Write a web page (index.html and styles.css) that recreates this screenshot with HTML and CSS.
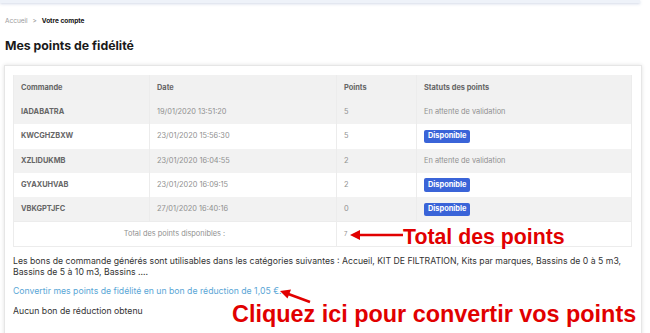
FILE: index.html
```html
<!DOCTYPE html>
<html lang="fr">
<head>
  <meta charset="UTF-8" />
  <meta name="viewport" content="width=device-width, initial-scale=1.0" />
  <title>Mes points de fidélité</title>
  <link rel="stylesheet" href="styles.css">
</head>
<body>
  <div class="topbar"></div>

  <main class="page">
    <nav class="crumbs">
      <a href="#">Accueil</a>
      <span class="sep">&gt;</span>
      <strong>Votre compte</strong>
    </nav>

    <h1>Mes points de fidélité</h1>

    <section class="card">
      <table class="points">
        <thead>
          <tr>
            <th class="c-cmd">Commande</th>
            <th class="c-date">Date</th>
            <th class="c-pts">Points</th>
            <th class="c-status">Statuts des points</th>
          </tr>
        </thead>
        <tbody>
          <tr>
            <td class="ref">IADABATRA</td>
            <td>19/01/2020 13:51:20</td>
            <td>5</td>
            <td>En attente de validation</td>
          </tr>
          <tr>
            <td class="ref">KWCGHZBXW</td>
            <td>23/01/2020 15:56:30</td>
            <td>5</td>
            <td><span class="badge">Disponible</span></td>
          </tr>
          <tr>
            <td class="ref">XZLIDUKMB</td>
            <td>23/01/2020 16:04:55</td>
            <td>2</td>
            <td>En attente de validation</td>
          </tr>
          <tr>
            <td class="ref">GYAXUHVAB</td>
            <td>23/01/2020 16:09:15</td>
            <td>2</td>
            <td><span class="badge">Disponible</span></td>
          </tr>
          <tr>
            <td class="ref">VBKGPTJFC</td>
            <td>27/01/2020 16:40:16</td>
            <td>0</td>
            <td><span class="badge">Disponible</span></td>
          </tr>
        </tbody>
        <tfoot>
          <tr>
            <td colspan="2" class="total-label">Total des points disponibles :</td>
            <td colspan="2" class="total-value">7</td>
          </tr>
        </tfoot>
      </table>

      <p class="info">Les bons de commande générés sont utilisables dans les catégories suivantes : Accueil, KIT DE FILTRATION, Kits par marques, Bassins de 0 à 5 m3, Bassins de 5 à 10 m3, Bassins ....</p>
      <p class="convert"><a href="#">Convertir mes points de fidélité en un bon de réduction de 1,05 €.</a></p>
      <p class="empty">Aucun bon de réduction obtenu</p>
    </section>
  </main>

  <!-- annotations drawn over the screenshot -->
  <svg class="arrows" width="650" height="333" viewBox="0 0 650 333">
    <line x1="403" y1="235" x2="357" y2="235" stroke="#e10000" stroke-width="2.6" />
    <polygon points="350,235 360,230 360,240" fill="#e10000" />
    <line x1="310" y1="302" x2="287" y2="293.5" stroke="#e10000" stroke-width="2.6" />
    <polygon points="280,291 291,289.5 287.5,298.5" fill="#e10000" />
  </svg>
  <div class="note note-total">Total des points</div>
  <div class="note note-convert">Cliquez ici pour convertir vos points</div>
</body>
</html>
```

FILE: styles.css
```css
body {
  margin: 0;
  font-family: Inter, "Open Sans", sans-serif;
  color: #333;
  background: #fff;
  position: relative;
  overflow: hidden;
  height: 333px;
}
.topbar {
  width: 640px;
  height: 3px;
  background: #eef2f9;
  box-shadow: 0 1px 3px rgba(70, 100, 160, 0.25);
}
.page {
  padding: 0 8px 0 4px;
}
.crumbs {
  margin-top: 14px;
  padding-left: 1px;
  font-size: 6.5px;
  line-height: 8px;
  color: #999;
}
.crumbs a {
  color: #999;
  text-decoration: none;
}
.crumbs .sep {
  margin: 0 3px;
}
.crumbs strong {
  color: #111;
  font-weight: 700;
}
h1 {
  margin: 13px 0 11px 1px;
  font-size: 12.3px;
  line-height: 16px;
  font-weight: 700;
  color: #1a1a1a;
}
.card {
  border: 1px solid #e6e6e6;
  box-shadow: 0 0 4px rgba(0, 0, 0, 0.12);
  padding: 9px 9px 30px 8px;
  background: #fff;
}
.points {
  width: 100%;
  border-collapse: collapse;
  font-size: 7.4px;
  color: #909090;
}
.points th,
.points td {
  text-align: left;
  padding: 8px 8px 8px 7px;
  line-height: 8.2px;
  border-left: 1px solid #ececec;
  border-right: 1px solid #ececec;
}
.points th {
  font-weight: 700;
  color: #666;
  background: #f1f1f1;
  padding-top: 9px;
}
.c-cmd { width: 120px; }
.c-date { width: 171px; }
.c-pts { width: 64px; }
.points tbody tr:nth-child(odd) td {
  background: #f2f2f2;
}
.points td.ref {
  font-weight: 700;
  color: #666;
}
.badge {
  display: inline-block;
  background: #3a64d8;
  color: #fff;
  font-weight: 700;
  padding: 2.5px 4px;
  border-radius: 2px;
  margin: -3px 0;
}
.points tfoot td {
  border: 1px solid #ececec;
}
.total-label {
  text-align: center !important;
}
.total-value {
  font-size: 6px;
}
.info {
  margin: 9px 0 0;
  font-size: 8.7px;
  line-height: 11px;
  color: #333;
}
.convert {
  margin: 8px 0 0;
  font-size: 8.7px;
  line-height: 11px;
}
.convert a {
  color: #5aa6d6;
  text-decoration: none;
}
.empty {
  margin: 9px 0 0;
  font-size: 8.7px;
  line-height: 11px;
}
.arrows {
  position: absolute;
  left: 0;
  top: 0;
}
.note {
  position: absolute;
  font-family: "Liberation Sans", Arial, sans-serif;
  font-weight: 700;
  color: #e10000;
  white-space: nowrap;
}
.note-total {
  left: 403px;
  top: 225px;
  font-size: 21.3px;
  line-height: 24px;
}
.note-convert {
  left: 232px;
  top: 300px;
  font-size: 23.4px;
  line-height: 28px;
}
```
